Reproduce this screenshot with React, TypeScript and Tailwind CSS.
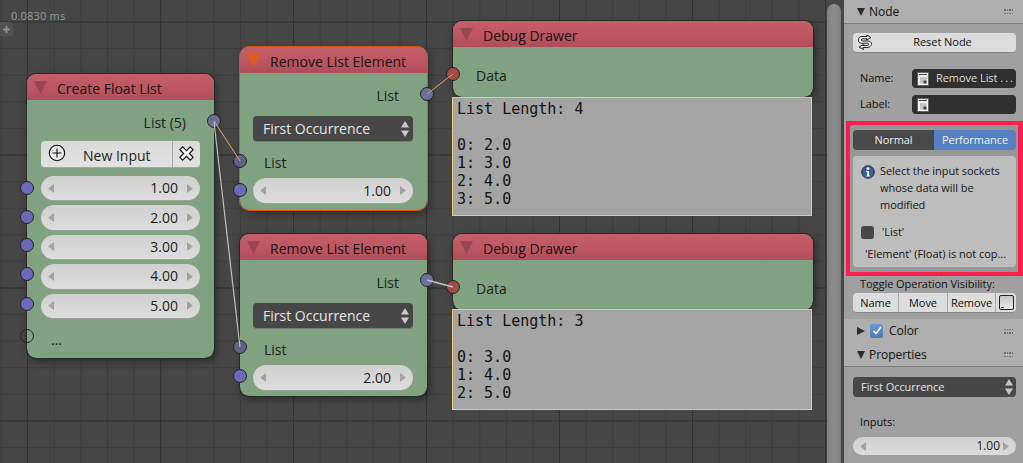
import type { ReactNode } from "react";

const uiFont = "font-['Open_Sans','Noto_Sans',sans-serif]";

function Tri({ className }: { className: string }) {
  return (
    <svg viewBox="0 0 14 14" className={className}>
      <path d="M0 0H14L7 14Z" fill="currentColor" />
    </svg>
  );
}

function Socket({ className, color = "bg-[#6a6ab8]" }: { className: string; color?: string }) {
  return <span className={`absolute h-[14px] w-[14px] rounded-full border border-[#222] ${color} ${className}`} />;
}

function UpDown({ className = "" }: { className?: string }) {
  return (
    <svg viewBox="0 0 8 16" className={`h-[16px] w-[8px] ${className}`}>
      <path d="M4 0L8 6.5H0Z M4 16L8 9.5H0Z" fill="#c8c8c8" />
    </svg>
  );
}

function NumberField({ value, className = "", text = "text-[14px]", valuePad = "pr-[9px]" }: { value: string; className?: string; text?: string; valuePad?: string }) {
  return (
    <div className={`flex items-center rounded-full border-b border-[#9da39d] bg-gradient-to-b from-[#d0d0d0] to-[#dcdcdc] px-[7px] text-[#1c1c1c] ${text} ${className}`}>
      <svg viewBox="0 0 6 9" className="h-[9px] w-[6px] shrink-0">
        <path d="M6 0V9L0 4.5Z" fill="#a2a2a2" />
      </svg>
      <span className={`flex-1 text-right leading-none ${valuePad}`}>{value}</span>
      <svg viewBox="0 0 6 9" className="h-[9px] w-[6px] shrink-0">
        <path d="M0 0V9L6 4.5Z" fill="#a2a2a2" />
      </svg>
    </div>
  );
}

function ModeSelect({ className = "" }: { className?: string }) {
  return (
    <div className={`flex items-center justify-between rounded-[4px] border-b border-[#6f7f6f] bg-[#474747] pl-[10px] pr-[4px] text-[14px] text-[#e6e6e6] ${className}`}>
      <span>First Occurrence</span>
      <UpDown />
    </div>
  );
}

function NodeHeader({ title, selected }: { title: string; selected?: boolean }) {
  return (
    <div className="relative flex h-[26px] shrink-0 items-center rounded-t-[9px] bg-gradient-to-b from-[#c45f69] via-[#bd5862] to-[#af4e58] pl-[7px] text-[14px] text-[#1b1010]">
      {selected ? (
        <Tri className="h-[13px] w-[13px] text-[#e4591c]" />
      ) : (
        <Tri className="h-[13px] w-[13px] text-[#984650]" />
      )}
      <span className="ml-[10px] pt-[2px]">{title}</span>
    </div>
  );
}

function Node({ title, className, selected, children }: { title: string; className: string; selected?: boolean; children: ReactNode }) {
  return (
    <div
      className={`absolute flex w-[187px] flex-col rounded-[9px] bg-[#80a280] shadow-[2px_3px_9px_rgba(0,0,0,0.45)] outline-1 ${
        selected ? "outline-[#d9560f]" : "outline-[#2a2a2a]"
      } ${className}`}
    >
      <NodeHeader title={title} selected={selected} />
      {children}
    </div>
  );
}

function RemoveBody({ value }: { value: string }) {
  return (
    <div className="flex flex-1 flex-col pl-[13px] pr-[14px] text-[14px] text-[#1b1f1b]">
      <div className="mt-[13px] pr-[14px] text-right leading-[19px]">List</div>
      <ModeSelect className="mt-[11px] h-[26px]" />
      <div className="mt-[11px] pl-[11px] leading-[19px]">List</div>
      <NumberField value={value} className="mt-[6px] h-[26px]" />
    </div>
  );
}

function DebugNode({ className }: { className: string }) {
  return (
    <div className={`absolute flex h-[76px] w-[360px] flex-col rounded-[9px] bg-[#80a280] shadow-[2px_3px_9px_rgba(0,0,0,0.45)] outline-1 outline-[#2a2a2a] ${className}`}>
      <NodeHeader title="Debug Drawer" />
      <div className="pl-[23px] pt-[19px] text-[14px] leading-[19px] text-[#1b1f1b]">Data</div>
      <Socket className="-left-[7px] top-[46px]" color="bg-[#a34a4a]" />
    </div>
  );
}

function DebugText({ className, lines }: { className: string; lines: string[] }) {
  return (
    <pre className={`absolute w-[360px] border border-[#e8c87a] bg-[#aaaaaa]/95 pl-[4px] pt-[2px] font-['DejaVu_Sans_Mono',monospace] text-[15px] leading-[18px] text-[#111] ${className}`}>
      {lines.join("\n")}
    </pre>
  );
}

function NodeGlyph() {
  return (
    <svg viewBox="0 0 12 14" className="h-[14px] w-[12px] shrink-0">
      <rect x="0.5" y="0.5" width="11" height="13" fill="#f2f2f2" stroke="#666" />
      <path d="M2 2.5H10" stroke="#444" />
      <path d="M3 5H9.5V11.5H3Z" fill="#c4c4c4" />
      <path d="M6.5 8.5H9.5V11.5H6.5Z" fill="#444" />
    </svg>
  );
}

function PanelHeader({ label, open, check, line }: { label: string; open?: boolean; check?: boolean; line?: boolean }) {
  return (
    <div className={`flex h-[24px] shrink-0 items-center bg-[#aeaeae] pl-[13px] pr-[10px] text-[#111] ${line ? "border-b border-[#7e7e7e]" : ""}`}>
      {open ? (
        <svg viewBox="0 0 8 8" className="mr-[3px] h-[8px] w-[8px]"><path d="M0 0H8L4 8Z" fill="#2d2d2d" /></svg>
      ) : (
        <svg viewBox="0 0 8 8" className="mr-[2px] h-[8px] w-[8px]"><path d="M0 0V8L8 4Z" fill="#2d2d2d" /></svg>
      )}
      {check && (
        <span className="ml-[3px] mr-[6px] flex h-[14px] w-[13px] items-center justify-center rounded-[2px] bg-gradient-to-b from-[#6f97d6] to-[#4f77b6]">
          <svg viewBox="0 0 12 12" className="h-[12px] w-[12px]"><path d="M2.5 6L5 8.5L10 2" fill="none" stroke="#fff" strokeWidth="1.6" /></svg>
        </span>
      )}
      <span className={`flex-1 text-[12px] ${open ? "ml-[1px]" : ""}`}>{label}</span>
      <div className="grid grid-cols-4 gap-[1px] gap-y-[2px]">
        {Array.from({ length: 8 }).map((_, i) => (
          <span key={i} className="h-[1.5px] w-[1.5px] bg-[#6e6e6e]" />
        ))}
      </div>
    </div>
  );
}

export default function App() {
  return (
    <div className={`flex h-[463px] w-[1023px] overflow-hidden bg-[#474747] ${uiFont}`}>
      {/* node canvas */}
      <div className="relative h-full w-[827px] shrink-0 overflow-hidden bg-[#474747] bg-[linear-gradient(#3d3d3d_1px,transparent_1px),linear-gradient(90deg,#3d3d3d_1px,transparent_1px)] bg-[size:26.6px_26.6px] bg-[position:0.6px_21.5px]">
        <div className="absolute inset-0 bg-[linear-gradient(#333333_1px,transparent_1px),linear-gradient(90deg,#333333_1px,transparent_1px)] bg-[size:133px_133px] bg-[position:27px_21.5px]" />
        <div className="absolute left-[11px] top-[9px] text-[11px] leading-[14px] tracking-[0.2px] text-[#9c9c9c]">0.0830 ms</div>
        <div className="absolute left-0 top-[22px] flex h-[14px] w-[13px] items-center justify-center rounded-r-[3px] bg-[#525252] text-[#8e8e8e]">
          <svg viewBox="0 0 7 7" className="h-[7px] w-[7px]"><path d="M2.5 0H4.5V2.5H7V4.5H4.5V7H2.5V4.5H0V2.5H2.5Z" fill="currentColor" /></svg>
        </div>

        <Node title="Create Float List" className="left-[27px] top-[74px] h-[284px]">
          <div className="flex flex-1 flex-col px-[14px] text-[14px] text-[#1b1f1b]">
            <div className="mt-[13px] pr-[14px] text-right leading-[19px]">List (5)</div>
            <div className="mt-[9px] flex h-[27px] rounded-[4px] border-b border-[#a0a8a0] bg-gradient-to-b from-[#d9d9d9] to-[#e2e2e2]">
              <div className="flex flex-1 items-center border-r border-[#a8a8a8] pl-[7px]">
                <svg viewBox="0 0 18 18" className="-mt-[3px] h-[18px] w-[18px] shrink-0">
                  <circle cx="9" cy="9" r="7.7" fill="#e8e8e8" stroke="#111" strokeWidth="1.1" />
                  <path d="M9 4.5V13.5M4.5 9H13.5" stroke="#111" strokeWidth="1.1" />
                </svg>
                <span className="ml-[17px] pt-[3px]">New Input</span>
              </div>
              <div className="flex w-[27px] items-center justify-center">
                <svg viewBox="0 0 18 18" className="-mt-[2px] h-[17px] w-[17px]">
                  <path d="M2 5L5 2L9 6L13 2L16 5L12 9L16 13L13 16L9 12L5 16L2 13L6 9Z" fill="#f4f4f4" stroke="#111" strokeWidth="1.2" />
                </svg>
              </div>
            </div>
            <div className="mt-[8px] flex flex-col gap-[4px]">
              {["1.00", "2.00", "3.00", "4.00", "5.00"].map((v) => (
                <NumberField key={v} value={v} className="h-[25.4px]" />
              ))}
            </div>
            <div className="mt-[11px] pl-[10px] leading-[19px]">...</div>
          </div>
          <Socket className="-left-[7px] top-[107px]" />
          <Socket className="-left-[7px] top-[136px]" />
          <Socket className="-left-[7px] top-[164px]" />
          <Socket className="-left-[7px] top-[193px]" />
          <Socket className="-left-[7px] top-[223px]" />
          <Socket className="-left-[7px] top-[255px]" color="bg-transparent" />
          <Socket className="-right-[7px] top-[40px]" color="bg-[#6c7099]" />
        </Node>

        <Node title="Remove List Element" selected className="left-[240px] top-[47px] h-[163px]">
          <RemoveBody value="1.00" />
          <Socket className="-right-[7px] top-[40px]" color="bg-[#6c7099]" />
          <Socket className="-left-[7px] top-[107px]" color="bg-[#5f6385]" />
          <Socket className="-left-[7px] top-[136px]" />
        </Node>

        <Node title="Remove List Element" className="left-[240px] top-[234px] h-[162px]">
          <RemoveBody value="2.00" />
          <Socket className="-right-[7px] top-[39px]" color="bg-[#6c7099]" />
          <Socket className="-left-[7px] top-[106px]" color="bg-[#5f6385]" />
          <Socket className="-left-[7px] top-[135px]" />
        </Node>

        <DebugNode className="left-[453px] top-[21px]" />
        <DebugText className="left-[452px] top-[97px] h-[119px]" lines={["List Length: 4", "", "0: 2.0", "1: 3.0", "2: 4.0", "3: 5.0"]} />
        <DebugNode className="left-[453px] top-[234px]" />
        <DebugText className="left-[452px] top-[309px] h-[101px]" lines={["List Length: 3", "", "0: 3.0", "1: 4.0", "2: 5.0"]} />

        {/* links between sockets */}
        <svg className="pointer-events-none absolute inset-0 h-full w-full" viewBox="0 0 827 463">
          <path d="M214 121L240 161" stroke="#e0a55c" strokeWidth="1" fill="none" />
          <path d="M214 122L240 347" stroke="#bdbdbd" strokeWidth="1.2" fill="none" />
          <path d="M427 94L453 74" stroke="#e0a55c" strokeWidth="1" fill="none" />
          <path d="M427 280L453 287" stroke="#c4c4c4" strokeWidth="1.4" fill="none" />
        </svg>
      </div>

      {/* scrollbar */}
      <div className="h-full w-[14px] shrink-0 pt-[4px]">
        <div className="h-full rounded-t-full bg-gradient-to-r from-[#808080] via-[#8e8e8e] to-[#808080]" />
      </div>
      <div className="h-full w-[3px] shrink-0 bg-[#474747]" />

      {/* properties panel */}
      <div className="flex h-full w-[179px] shrink-0 flex-col bg-[#a0a0a0] text-[11px] tracking-[-0.05px] text-[#111]">
        <PanelHeader label="Node" open line />
        <div className="ml-[9px] mr-[7px] mt-[9px] flex h-[20px] shrink-0 items-center rounded-[4px] border-b border-[#888] bg-[#dcdcdc] pl-[3px]">
          <svg viewBox="0 0 18 16" className="h-[16px] w-[18px] shrink-0">
            <path d="M3 7C1.5 4 3 1.5 6 1.5H11L10.5 0L15 2.5L10.5 5L11 3.8H6.5C5 3.8 5 6 6.5 6H11.5C15 6 16.5 8.5 15 10.5C14 12 12.5 12.5 11 12.5H7L7.5 14.5L3 12L7.5 9.5L7 10.5H11.5C13 10.5 13 8.3 11.5 8.3H6C5 8.3 3.7 8 3 7Z" fill="#eee" stroke="#111" strokeWidth="0.9" />
          </svg>
          <span className="flex-1 pr-[5px] text-center">Reset Node</span>
        </div>
        <div className="mt-[16px] flex h-[19px] shrink-0 items-center pl-[16px] pr-[7px]">
          <span className="w-[52px]">Name:</span>
          <div className="flex h-[19px] flex-1 items-center rounded-[4px] bg-[#303030] pl-[5px] text-[#dedede]">
            <NodeGlyph />
            <span className="ml-[7px] whitespace-nowrap">
              Remove List <span className="tracking-[2px]">...</span>
            </span>
          </div>
        </div>
        <div className="mt-[7px] flex h-[19px] shrink-0 items-center pl-[16px] pr-[7px]">
          <span className="w-[52px]">Label:</span>
          <div className="flex h-[19px] flex-1 items-center rounded-[4px] bg-[#303030] pl-[5px]">
            <NodeGlyph />
          </div>
        </div>

        {/* highlighted block */}
        <div className="ml-[2px] mt-[7px] flex h-[155px] shrink-0 flex-col border-[4px] border-r-[5px] border-[#ff1f4e] bg-[#979797] pl-[3px] pr-[2px] pt-[5px]">
          <div className="flex h-[20px] shrink-0 overflow-hidden rounded-[4px]">
            <div className="flex w-[81px] items-center justify-center bg-[#484848] text-[#eee]">Normal</div>
            <div className="flex flex-1 items-center justify-center bg-[#5680c2] text-[#f2f2f2]">Performance</div>
          </div>
          <div className="mt-[6px] flex h-[111px] flex-col rounded-[4px] bg-[#bdbdbd] pl-[8px] pr-[2px] pt-[6px] text-[#151515]">
            <div className="flex items-start">
              <svg viewBox="0 0 14 14" className="mt-[3px] h-[14px] w-[14px] shrink-0">
                <circle cx="7" cy="7" r="6.2" fill="#3d5f96" stroke="#14243c" />
                <circle cx="7" cy="3.6" r="1.4" fill="#fff" />
                <path d="M5.3 6H8V10.4H9V11.4H5.3V10.4H6.3V7H5.3Z" fill="#fff" />
              </svg>
              <span className="ml-[5px] leading-[17px]">
                Select the input sockets
                <br />
                whose data will be
                <br />
                modified
              </span>
            </div>
            <div className="mt-[11px] flex items-center">
              <span className="h-[13px] w-[13px] rounded-[3px] bg-[#474747]" />
              <span className="ml-[8px]">'List'</span>
            </div>
            <div className="ml-[4px] mt-[5px] whitespace-nowrap">'Element' (Float) is not cop...</div>
          </div>
        </div>

        <div className="pl-[16px] leading-[15px]">Toggle Operation Visibility:</div>
        <div className="ml-[9px] mr-[7px] mt-[2px] flex h-[20px] shrink-0 items-center overflow-hidden rounded-[4px] border-b border-[#888] bg-[#dcdcdc] text-center">
          <span className="w-[46px] border-r border-[#aaa] leading-[19px]">Name</span>
          <span className="w-[49px] border-r border-[#aaa] leading-[19px]">Move</span>
          <span className="w-[48px] border-r border-[#aaa] leading-[19px]">Remove</span>
          <span className="flex flex-1 items-center justify-center">
            <span className="relative h-[15px] w-[15px] rounded-[2px] border border-[#222] bg-gradient-to-b from-[#c4c4c4] to-[#ececec]">
              <span className="absolute bottom-[1px] left-[1px] h-[1px] w-[3px] bg-[#c01010]" />
            </span>
          </span>
        </div>
        <div className="mt-[6px]">
          <PanelHeader label="Color" check />
        </div>
        <PanelHeader label="Properties" open line />
        <div className="ml-[9px] mr-[7px] mt-[10px] flex h-[20px] shrink-0 items-center justify-between rounded-[4px] bg-[#474747] pl-[8px] pr-[3px] text-[#e6e6e6]">
          <span>First Occurrence</span>
          <UpDown className="h-[14px]" />
        </div>
        <div className="mt-[17px] pl-[16px] leading-[16px]">Inputs:</div>
        <NumberField value="1.00" text="text-[12px]" valuePad="pr-[3px]" className="ml-[9px] mr-[7px] mt-[7px] h-[19px] shrink-0" />
      </div>
    </div>
  );
}
